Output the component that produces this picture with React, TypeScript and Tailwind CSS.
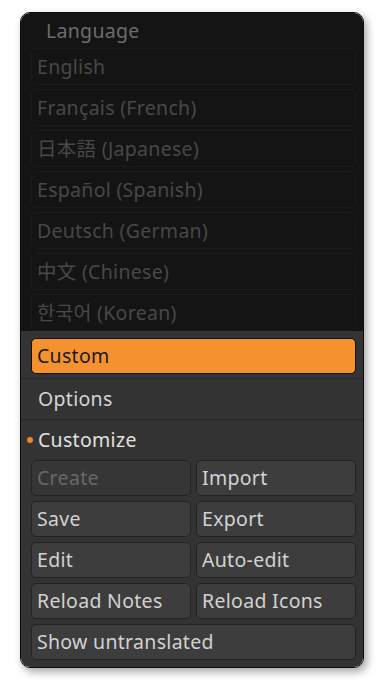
import React from 'react';

const LANGUAGES = [
  'English',
  'Français (French)',
  '日本語 (Japanese)',
  'Español (Spanish)',
  'Deutsch (German)',
  '中文 (Chinese)',
  '한국어 (Korean)',
];

const BUTTONS: { label: string; disabled?: boolean }[][] = [
  [{ label: 'Create', disabled: true }, { label: 'Import' }],
  [{ label: 'Save' }, { label: 'Export' }],
  [{ label: 'Edit' }, { label: 'Auto-edit' }],
  [{ label: 'Reload Notes' }, { label: 'Reload Icons' }],
];

const FONT = "font-['Noto_Sans','Noto_Sans_CJK_JP',sans-serif]";
const TEXT = 'text-[19.5px] tracking-[0.3px]';

const ToolButton: React.FC<{ label: string; disabled?: boolean }> = ({ label, disabled }) => (
  <div
    className={`flex h-[36px] items-center rounded-[5px] border border-[#232323] px-[5px] ${TEXT} ${
      disabled ? 'bg-[#363636] text-[#686868]' : 'bg-[#3d3d3d] text-[#d2d2d2]'
    }`}
  >
    {label}
  </div>
);

export default function App() {
  return (
    <div className={`min-h-[687px] bg-white pt-[12px] pl-[20px] ${FONT}`}>
      <div className="flex h-[656px] w-[344px] flex-col overflow-hidden rounded-[10px] border border-[#0c0c0c] shadow-[3px_4px_8px_rgba(0,0,0,0.35)]">
        {/* language list */}
        <div className="flex h-[318px] flex-col bg-[#141414] pl-[10px] pr-[7px]">
          <div className={`flex h-[36px] items-center pl-[15px] text-[#6c6c6c] ${TEXT}`}>Language</div>
          <div className="flex flex-col gap-[4px]">
            {LANGUAGES.map((lang) => (
              <div
                key={lang}
                className={`flex h-[37px] shrink-0 items-center rounded-[5px] border border-[#1b1b1b] px-[5px] text-[#484848] ${TEXT}`}
              >
                {lang}
              </div>
            ))}
          </div>
        </div>

        {/* lower panel */}
        <div className="flex flex-1 flex-col bg-[#333333]">
          <div className="pl-[10px] pr-[7px] pt-[7px] pb-[4px]">
            <div className={`flex h-[36px] items-center rounded-[5px] border border-[#111] bg-[#f5922f] px-[5px] text-[#1a1a1a] ${TEXT}`}>
              Custom
            </div>
          </div>
          <div className="border-t border-[#272727] shadow-[inset_0_1px_0_#3c3c3c]" />
          <div className={`flex h-[40px] items-center pl-[17px] text-[#d5d5d5] ${TEXT}`}>Options</div>
          <div className="border-t border-[#272727] shadow-[inset_0_1px_0_#3c3c3c]" />
          <div className={`flex h-[40px] items-center gap-[5px] pl-[6px] text-[#e0e0e0] ${TEXT}`}>
            <span className="h-[6px] w-[6px] rounded-full bg-[#e8882a]" />
            Customize
          </div>
          <div className="flex flex-col gap-[5px] pl-[10px] pr-[7px]">
            {BUTTONS.map((row, i) => (
              <div key={i} className="grid grid-cols-2 gap-[5px]">
                {row.map((b) => (
                  <ToolButton key={b.label} label={b.label} disabled={b.disabled} />
                ))}
              </div>
            ))}
            <ToolButton label="Show untranslated" />
          </div>
        </div>
      </div>
    </div>
  );
}
